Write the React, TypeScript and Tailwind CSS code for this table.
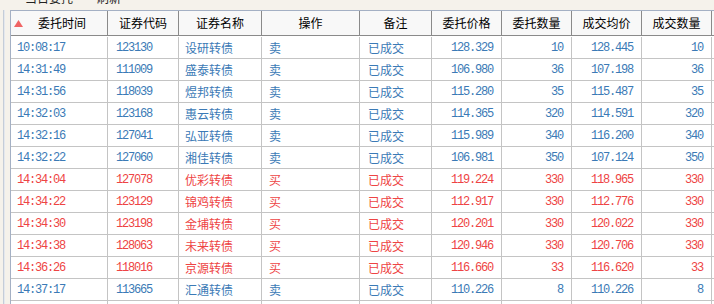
import React from "react";

type Row = [string, string, string, string, string, string, string, string];

const rows: Row[] = [
  ["10:08:17", "123130", "设研转债", "卖", "128.329", "10", "128.445", "10"],
  ["14:31:49", "111009", "盛泰转债", "卖", "106.980", "36", "107.198", "36"],
  ["14:31:56", "118039", "煜邦转债", "卖", "115.280", "35", "115.487", "35"],
  ["14:32:03", "123168", "惠云转债", "卖", "114.365", "320", "114.591", "320"],
  ["14:32:16", "127041", "弘亚转债", "卖", "115.989", "340", "116.200", "340"],
  ["14:32:22", "127060", "湘佳转债", "卖", "106.981", "350", "107.124", "350"],
  ["14:34:04", "127078", "优彩转债", "买", "119.224", "330", "118.965", "330"],
  ["14:34:22", "123129", "锦鸡转债", "买", "112.917", "330", "112.776", "330"],
  ["14:34:30", "123198", "金埔转债", "买", "120.201", "330", "120.022", "330"],
  ["14:34:38", "128063", "未来转债", "买", "120.946", "330", "120.706", "330"],
  ["14:36:26", "118016", "京源转债", "买", "116.660", "33", "116.620", "33"],
  ["14:37:17", "113665", "汇通转债", "卖", "110.226", "8", "110.226", "8"],
];

const headers = ["委托时间", "证券代码", "证券名称", "操作", "备注", "委托价格", "委托数量", "成交均价", "成交数量"];

const cjk = { fontFamily: '"Noto Sans CJK SC", "Noto Sans", sans-serif' };
const mono = { fontFamily: '"Liberation Mono", "DejaVu Sans Mono", monospace', letterSpacing: "-1.2px" };

const grid = "grid grid-cols-[97px_71px_83px_98px_72px_70px_70px_70px_70px]";

export default function App() {
  return (
    <div className="w-[714px] h-[304px] overflow-hidden bg-[#f5f2eb] text-[12px] leading-none" style={cjk}>
      <div className="h-[10px] overflow-hidden flex text-[12px] text-[#222]">
        <div className="mt-[-8px] ml-[25px] leading-[12px]">当日委托</div>
        <div className="mt-[-8px] ml-[24px] leading-[12px]">刷新</div>
      </div>
      <div className="flex">
        <div className="w-[10px] h-[294px] flex pl-[3px]">
          <div className="w-px bg-[#c5cdd8]" />
          <div className="w-px bg-[#e4e8ee]" />
        </div>
        <div className="flex-1 border-l border-t border-[#a4b0c4] bg-white">
          <div className={`${grid} h-[25px] bg-[#f8f8f8] border-b border-[#8a8a8a]`}>
            {headers.map((h, i) => (
              <div
                key={h}
                className="relative flex items-center justify-center border-r border-[#8a8a8a] text-black text-[12px]"
              >
                {i === 0 && (
                  <svg className="absolute left-[3px] top-[9px]" width="9" height="7" viewBox="0 0 9 7">
                    <polygon points="4.5,0 9,7 0,7" fill="#f06464" />
                  </svg>
                )}
                <span className={i === 0 ? "ml-[6px]" : ""}>{h}</span>
              </div>
            ))}
          </div>
          <div className="pt-px">
            {[...rows, null].map((r, ri) => {
              const buy = r ? r[3] === "买" : false;
              const color = buy ? "text-[#ee4444]" : "text-[#3b7ab6]";
              return (
                <div key={ri} className={`${grid} h-[22px] border-b border-[#c4c4c4] ${color}`}>
                  <div className="flex items-center pl-[6px] border-r border-[#c4c4c4]" style={mono}>{r?.[0]}</div>
                  <div className="flex items-center pl-[8px] border-r border-[#c4c4c4]" style={mono}>{r?.[1]}</div>
                  <div className="flex items-center pl-[6px] border-r border-[#c4c4c4]">{r?.[2]}</div>
                  <div className="flex items-center pl-[7px] border-r border-[#c4c4c4]">{r?.[3]}</div>
                  <div className="flex items-center pl-[8px] border-r border-[#c4c4c4]">{r ? "已成交" : ""}</div>
                  <div className="flex items-center justify-end pr-[8px] border-r border-[#c4c4c4]" style={mono}>{r?.[4]}</div>
                  <div className="flex items-center justify-end pr-[8px] border-r border-[#c4c4c4]" style={mono}>{r?.[5]}</div>
                  <div className="flex items-center justify-end pr-[8px] border-r border-[#c4c4c4]" style={mono}>{r?.[6]}</div>
                  <div className="flex items-center justify-end pr-[8px] border-r border-[#c4c4c4]" style={mono}>{r?.[7]}</div>
                </div>
              );
            })}
          </div>
        </div>
      </div>
    </div>
  );
}
